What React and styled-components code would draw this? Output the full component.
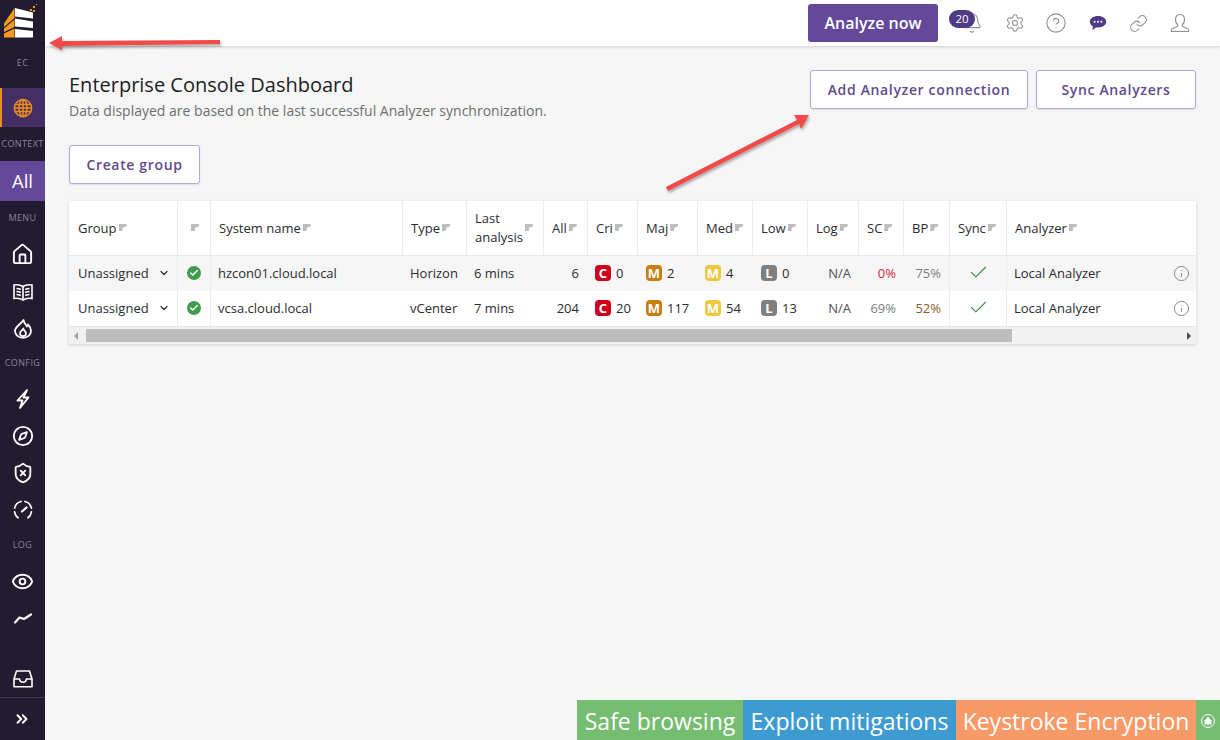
import React from 'react'
import styled, { createGlobalStyle } from 'styled-components'
import {
  Bell, Check, ChevronDown, ChevronsRight, CircleHelp, Compass, Eye, House, Info, Link,
  Settings, ShieldX,
} from 'lucide-react'

const GlobalStyle = createGlobalStyle`
  html, body { margin: 0; padding: 0; height: 100%; }
  body { font-family: "Open Sans", "Liberation Sans", sans-serif; background: #f6f6f6; overflow: hidden; }
  * { box-sizing: border-box; }
`

const Page = styled.div`
  position: relative;
  display: flex;
  width: 1220px;
  height: 740px;
  overflow: hidden;
`

const Sidebar = styled.nav`
  width: 45px;
  flex: none;
  height: 740px;
  background: #231b30;
  display: flex;
  flex-direction: column;
  align-items: stretch;
  color: #fff;
`

const LogoBox = styled.div`
  height: 42px;
  display: flex;
`

const SectionLabel = styled.div`
  height: ${p => p.$h}px;
  padding-bottom: ${p => p.$pb || 0}px;
  display: flex;
  align-items: center;
  justify-content: center;
  font-size: 9px;
  letter-spacing: 0.4px;
  color: #8b8496;
  white-space: nowrap;
`

const ActiveItem = styled.div`
  height: 39px;
  background: #432f63;
  border-left: 2px solid #f08c1e;
  padding-right: 2px;
  display: flex;
  align-items: center;
  justify-content: center;
  color: #f08c1e;
`

const AllItem = styled.div`
  height: 40px;
  padding-bottom: 1px;
  background: #64499b;
  display: flex;
  align-items: center;
  justify-content: center;
  font-size: 18.5px;
  color: #fff;
`

const NavIcon = styled.div`
  height: 37px;
  display: flex;
  align-items: center;
  justify-content: center;
  color: #fff;
`

const NavGroup = styled.div`
  display: flex;
  flex-direction: column;
  padding-top: ${p => p.$top || 0}px;
`

const Spacer = styled.div`
  flex: 1;
`

const Collapse = styled.div`
  height: 43px;
  border-top: 1px solid #3f3849;
  padding-right: 2px;
  display: flex;
  align-items: center;
  justify-content: center;
  color: #fff;
`

const Main = styled.div`
  flex: 1;
  min-width: 0;
  display: flex;
  flex-direction: column;
`

const Topbar = styled.header`
  height: 46px;
  background: #fff;
  box-shadow: 0 1px 3px rgba(0, 0, 0, 0.16);
  display: flex;
  align-items: center;
  justify-content: flex-end;
  padding: 0 30px 0 0;
`

const AnalyzeButton = styled.button`
  width: 130px;
  height: 38px;
  margin-right: 11px;
  border: 0;
  border-radius: 3px;
  background: #64499b;
  color: #fff;
  font: 600 16px "Open Sans", sans-serif;
`

const TopIcons = styled.div`
  display: flex;
  align-items: center;
  gap: 22px;
  color: #8f8f8f;
`

const BellWrap = styled.div`
  position: relative;
  width: 20px;
  height: 22px;
  margin-left: 12px;
  margin-right: 2px;
`

const CountBadge = styled.span`
  position: absolute;
  left: -12px;
  top: -2px;
  width: 26px;
  height: 18px;
  border-radius: 9px;
  background: #4f3a86;
  color: #fff;
  font-size: 11.5px;
  line-height: 17px;
  text-align: center;
`

const GearWrap = styled.div`
  display: flex;
  margin-right: -2px;
`

const Content = styled.main`
  padding: 24px 24px 0 24px;
`

const TitleRow = styled.div`
  display: flex;
  justify-content: space-between;
  align-items: flex-start;
`

const Title = styled.h1`
  margin: 0;
  font-size: 20px;
  line-height: 30px;
  font-weight: 400;
  color: #1d1d26;
`

const Subtitle = styled.p`
  margin: 1px 0 0;
  font-size: 14px;
  line-height: 20px;
  color: #6e6e6e;
`

const Actions = styled.div`
  display: flex;
  gap: 8px;
`

const OutlineButton = styled.button`
  width: ${p => p.$w}px;
  height: 39px;
  background: #fff;
  border: 1px solid #b7a6de;
  border-radius: 3px;
  color: #5f4a8c;
  font: 600 14px "Open Sans", sans-serif;
  letter-spacing: 0.65px;
  box-shadow: 0 1px 2px rgba(0, 0, 0, 0.1);
`

const GroupButton = styled(OutlineButton)`
  display: block;
  margin: 24px 0 17px;
`

const Table = styled.section`
  width: 1127px;
  background: #fff;
  box-shadow: 0 1px 3px rgba(0, 0, 0, 0.16);
  font-size: 13px;
  color: #2b2b33;
`

const columns = '109px 33px 192px 64px 77px 44px 50px 60px 55px 55px 51px 45px 46px 57px 1fr'

const HeadRow = styled.div`
  display: grid;
  grid-template-columns: ${columns};
  height: 55px;
  border-bottom: 1px solid #e8e8e8;
`

const HeadCell = styled.div`
  display: flex;
  align-items: center;
  padding-left: ${p => p.$pl ?? 8}px;
  border-right: ${p => (p.$last ? 0 : '1px solid #ececec')};
  line-height: 19px;
`

const SortMark = styled.i`
  width: 8px;
  height: 7px;
  flex: none;
  margin: -1px 0 0 ${p => p.$ml ?? 2}px;
  background: #bdbdbd;
  clip-path: polygon(0 0, 100% 0, 100% 35%, 55% 50%, 45% 100%, 0 100%);
`

const BodyRow = styled.div`
  display: grid;
  grid-template-columns: ${columns};
  height: 35px;
  background: ${p => (p.$odd ? '#f6f6f6' : '#fff')};
`

const Cell = styled.div`
  display: flex;
  align-items: center;
  justify-content: ${p => p.$justify || 'flex-start'};
  padding: ${p => p.$pad || '0 0 2px 7px'};
  border-right: ${p => (p.$line ? '1px solid #ececec' : 0)};
  color: ${p => p.$color || 'inherit'};
  white-space: nowrap;
`

const GroupCell = styled(Cell)`
  justify-content: space-between;
  padding: 0 7px 2px 9px;
`

const StatusDot = styled.span`
  width: 14px;
  height: 14px;
  border-radius: 50%;
  background: #3f9c4c;
  color: #fff;
  display: flex;
  align-items: center;
  justify-content: center;
`

const Severity = styled.span`
  width: 16px;
  height: 16px;
  flex: none;
  margin-right: 5px;
  border-radius: 4px;
  background: ${p => p.$bg};
  color: #fff;
  font-size: 13px;
  font-weight: 700;
  line-height: 16px;
  text-align: center;
`

const Scrollbar = styled.div`
  height: 18px;
  background: #f1f1f1;
  border-top: 1px solid #e8e8e8;
  display: flex;
  align-items: center;
  justify-content: space-between;
  padding: 0 5px;
`

const ScrollThumb = styled.div`
  width: 926px;
  height: 13px;
  background: #bdbdbd;
  margin-right: auto;
  margin-left: 8px;
`

const Arrow = styled.i`
  width: 0;
  height: 0;
  border-top: 4px solid transparent;
  border-bottom: 4px solid transparent;
  border-${p => (p.$left ? 'right' : 'left')}: 4px solid ${p => (p.$left ? '#a3a3a3' : '#4a4a4a')};
`

const Annotations = styled.svg`
  position: absolute;
  left: 0;
  top: 0;
  pointer-events: none;
`

const Strip = styled.div`
  position: absolute;
  right: 0;
  bottom: 0;
  height: 40px;
  display: flex;
  color: #fff;
  font-size: 23px;
`

const StripItem = styled.div`
  width: ${p => p.$w}px;
  padding-top: 1px;
  background: ${p => p.$bg};
  display: flex;
  align-items: center;
  justify-content: center;
  white-space: nowrap;
`

const Logo = () => (
  <svg width="45" height="42" viewBox="0 0 45 42">
    <g fill="#f39a1f">
      <path d="M14.500 8 L4 23.500 V27 L14.500 18Z" />
      <path d="M14.500 19.500 L4 28.500 V32 L14.500 27Z" />
      <path d="M14.500 28.500 L4 33.500 V37.500 H14.500Z" />
      <rect x="30" y="9" width="2" height="2" />
      <rect x="33" y="6" width="2" height="2" />
      <rect x="36" y="4" width="1" height="1" />
      <rect x="33" y="10" width="2" height="2" />
      <rect x="31" y="12" width="1" height="1" />
    </g>
    <g fill="#fff">
      <path d="M15 8 L33 12.500 V18.500 L15 16.500Z" />
      <path d="M15 18.500 L33 21.500 V28 L15 26.500Z" />
      <path d="M15 29 L33 31 V37.500 H15Z" />
    </g>
  </svg>
)

const GlobeIcon = () => (
  <svg width="20" height="20" viewBox="0 0 20 20" fill="none" stroke="currentColor" strokeWidth="1.5">
    <circle cx="10" cy="10" r="8.600" />
    <ellipse cx="10" cy="10" rx="4" ry="8.600" />
    <path d="M10 1.400 V18.600 M2.400 6.500 H17.600 M2.400 13.500 H17.600 M1.400 10 H18.600" />
  </svg>
)

const BookIcon = () => (
  <svg width="20" height="20" viewBox="0 0 20 20" fill="none" stroke="currentColor" strokeWidth="1.6">
    <path d="M10 4.500 C7.500 2.800 4 2.500 1 3 V16.500 C4 16 7.500 16.300 10 18 C12.500 16.300 16 16 19 16.500 V3 C16 2.500 12.500 2.800 10 4.500Z" />
    <path d="M10 4.500 V18 M3.500 6.500 C5 6.500 6.500 6.800 7.800 7.400 M3.500 9.500 C5 9.500 6.500 9.800 7.800 10.400 M3.500 12.500 C5 12.500 6.500 12.800 7.800 13.400 M16.500 6.500 C15 6.500 13.500 6.800 12.200 7.400 M16.500 9.500 C15 9.500 13.500 9.800 12.200 10.400 M16.500 12.500 C15 12.500 13.500 12.800 12.200 13.400" />
  </svg>
)

const FlameIcon = () => (
  <svg width="20" height="20" viewBox="0 0 20 20" fill="none" stroke="currentColor" strokeWidth="1.800" strokeLinejoin="round">
    <path d="M10.500 1 C11 4.500 13 5.500 14 7.500 C14.500 6.900 14.800 6.300 14.900 5.500 C16.800 7.300 18 9.300 18 11.800 C18 16 14.500 18.800 10 18.800 C5.500 18.800 2 16 2 11.800 C2 7.500 7.500 5.500 10.500 1Z" />
    <path d="M10.200 9.500 C10 11 7 12.200 7 14.300 C7 16 8.300 17.200 10 17.200 C11.700 17.200 13 16 13 14.300 C13 12.500 10.800 11.500 10.200 9.500Z" />
  </svg>
)

const BoltIcon = () => (
  <svg width="20" height="20" viewBox="0 0 20 20" fill="none" stroke="currentColor" strokeWidth="1.800" strokeLinejoin="round">
    <path d="M14 1 L4.500 11.500 H9.500 L7 19 L15.500 8.500 H10.500Z" />
  </svg>
)

const GaugeIcon = () => (
  <svg width="20" height="20" viewBox="0 0 20 20" fill="none" stroke="currentColor" strokeWidth="1.800" strokeLinecap="round">
    <path d="M5 17.800 A8.700 8.700 0 0 1 1.600 12 M1.600 8 A8.700 8.700 0 0 1 8 1.500 M12 1.500 A8.700 8.700 0 0 1 18.400 8 M18.400 12 A8.700 8.700 0 0 1 15 17.800" />
    <path d="M9 11.500 L13.500 7.500" strokeWidth="2.200" />
  </svg>
)

const TrendIcon = () => (
  <svg width="20" height="20" viewBox="0 0 20 20" fill="none" stroke="currentColor" strokeWidth="2.200" strokeLinecap="round" strokeLinejoin="round">
    <path d="M2 13.500 L6.500 8.500 L11 10 L18 5.500" />
  </svg>
)

const TrayIcon = () => (
  <svg width="20" height="18" viewBox="0 0 20 18" fill="none" stroke="currentColor" strokeWidth="1.600" strokeLinejoin="round">
    <path d="M3.500 1 H16.500 L19 9 V16.800 H1 V9Z" />
    <path d="M1 9 H6.500 C6.800 11 8 12.200 10 12.200 C12 12.200 13.200 11 13.500 9 H19" />
  </svg>
)

const ChatIcon = () => (
  <svg width="18" height="16" viewBox="0 0 18 16">
    <path d="M9 1 C13.700 1 17.200 3.500 17.200 6.800 C17.200 10.100 13.700 12.500 9 12.500 C8.300 12.500 7.600 12.450 7 12.300 C5.900 13.600 4.300 14.600 2.700 14.900 C3.500 13.900 4 12.800 4 11.400 C2 10.300 0.800 8.700 0.800 6.800 C0.800 3.500 4.300 1 9 1Z" fill="#4f3a86" />
    <circle cx="5.600" cy="6.800" r="1" fill="#fff" />
    <circle cx="9" cy="6.800" r="1" fill="#fff" />
    <circle cx="12.400" cy="6.800" r="1" fill="#fff" />
  </svg>
)

const UserIcon = () => (
  <svg width="20" height="20" viewBox="0 0 20 20" fill="none" stroke="currentColor" strokeWidth="1.200" strokeLinejoin="round">
    <path d="M10 1.500 C12.900 1.500 14.500 3.700 14.500 6.500 C14.500 8.800 13.500 10.800 12.300 11.800 V13 C12.300 14 17 14.500 18.500 16.500 V18.500 H1.500 V16.500 C3 14.500 7.700 14 7.700 13 V11.800 C6.500 10.800 5.500 8.800 5.500 6.500 C5.500 3.700 7.100 1.500 10 1.500Z" />
  </svg>
)

const HomeBadge = () => (
  <svg width="16" height="16" viewBox="0 0 16 16">
    <circle cx="8" cy="8" r="6.500" fill="none" stroke="#fff" strokeWidth="1" />
    <path d="M8 3.800 L11.500 7.500 V11.500 H4.500 V7.500Z" fill="#fff" />
  </svg>
)

const headers = [
  { label: 'Group', pl: 9 },
  { label: '', pl: 13, ml: 0 },
  { label: 'System name' },
  { label: 'Type' },
  { label: 'Last analysis', wrap: true },
  { label: 'All' },
  { label: 'Cri' },
  { label: 'Maj' },
  { label: 'Med' },
  { label: 'Low' },
  { label: 'Log' },
  { label: 'SC' },
  { label: 'BP' },
  { label: 'Sync' },
  { label: 'Analyzer', last: true },
]

const rows = [
  { name: 'hzcon01.cloud.local', type: 'Horizon', last: '6 mins', all: 6, cri: 0, maj: 2, med: 4, low: 0, sc: '0%', scColor: '#d4233c', bp: '75%', bpColor: '#7d7d7d' },
  { name: 'vcsa.cloud.local', type: 'vCenter', last: '7 mins', all: 204, cri: 20, maj: 117, med: 54, low: 13, sc: '69%', scColor: '#7d7d7d', bp: '52%', bpColor: '#8a5a2b' },
]

const SeverityCell = ({ letter, bg, value, left = 7 }) => (
  <Cell $pad={`0 0 2px ${left}px`}>
    <Severity $bg={bg}>{letter}</Severity>
    {value}
  </Cell>
)

export default function App() {
  return (
    <Page>
      <GlobalStyle />
      <Sidebar>
        <LogoBox><Logo /></LogoBox>
        <SectionLabel $h={46} $pb={6}>EC</SectionLabel>
        <ActiveItem><GlobeIcon /></ActiveItem>
        <SectionLabel $h={34} $pb={2}>CONTEXT</SectionLabel>
        <AllItem>All</AllItem>
        <SectionLabel $h={33}>MENU</SectionLabel>
        <NavGroup $top={2}>
          <NavIcon><House size={23} strokeWidth={2} /></NavIcon>
          <NavIcon><BookIcon /></NavIcon>
          <NavIcon><FlameIcon /></NavIcon>
        </NavGroup>
        <SectionLabel $h={30}>CONFIG</SectionLabel>
        <NavGroup $top={3}>
          <NavIcon><BoltIcon /></NavIcon>
          <NavIcon><Compass size={22} strokeWidth={2} /></NavIcon>
          <NavIcon><ShieldX size={22} strokeWidth={2} /></NavIcon>
          <NavIcon><GaugeIcon /></NavIcon>
        </NavGroup>
        <SectionLabel $h={32}>LOG</SectionLabel>
        <NavGroup $top={3}>
          <NavIcon><Eye size={23} strokeWidth={2} /></NavIcon>
          <NavIcon><TrendIcon /></NavIcon>
        </NavGroup>
        <Spacer />
        <NavIcon><TrayIcon /></NavIcon>
        <Collapse><ChevronsRight size={18} strokeWidth={2.5} /></Collapse>
      </Sidebar>

      <Main>
        <Topbar>
          <AnalyzeButton>Analyze now</AnalyzeButton>
          <TopIcons>
            <BellWrap>
              <Bell size={22} strokeWidth={1.2} />
              <CountBadge>20</CountBadge>
            </BellWrap>
            <GearWrap><Settings size={20} strokeWidth={1.3} /></GearWrap>
            <CircleHelp size={22} strokeWidth={1.2} />
            <ChatIcon />
            <Link size={19} strokeWidth={1.3} />
            <UserIcon />
          </TopIcons>
        </Topbar>

        <Content>
          <TitleRow>
            <div>
              <Title>Enterprise Console Dashboard</Title>
              <Subtitle>Data displayed are based on the last successful Analyzer synchronization.</Subtitle>
            </div>
            <Actions>
              <OutlineButton $w={218}>Add Analyzer connection</OutlineButton>
              <OutlineButton $w={160}>Sync Analyzers</OutlineButton>
            </Actions>
          </TitleRow>
          <GroupButton $w={131}>Create group</GroupButton>

          <Table>
            <HeadRow>
              {headers.map((h, i) => (
                <HeadCell key={i} $pl={h.pl} $last={h.last}>
                  {h.wrap ? <span>Last<br />analysis</span> : h.label}
                  <SortMark $ml={h.ml} />
                </HeadCell>
              ))}
            </HeadRow>
            {rows.map((r, i) => (
              <BodyRow key={r.name} $odd={i === 0}>
                <GroupCell $line>Unassigned<ChevronDown size={12} strokeWidth={2.4} /></GroupCell>
                <Cell $line $justify="center" $pad="0 0 2px"><StatusDot><Check size={10} strokeWidth={3.5} /></StatusDot></Cell>
                <Cell>{r.name}</Cell>
                <Cell>{r.type}</Cell>
                <Cell>{r.last}</Cell>
                <Cell $justify="flex-end" $pad="0 9px 2px 0">{r.all}</Cell>
                <SeverityCell letter="C" bg="#d0021b" value={r.cri} />
                <SeverityCell letter="M" bg="#c97c10" value={r.maj} left={8} />
                <SeverityCell letter="M" bg="#edc840" value={r.med} />
                <SeverityCell letter="L" bg="#808080" value={r.low} left={8} />
                <Cell $justify="flex-end" $pad="0 8px 2px 0" $color="#4d4d56">N/A</Cell>
                <Cell $justify="flex-end" $pad="0 8px 2px 0" $color={r.scColor}>{r.sc}</Cell>
                <Cell $justify="flex-end" $pad="0 8px 2px 0" $color={r.bpColor} $line>{r.bp}</Cell>
                <Cell $justify="center" $pad="0 0 2px" $line $color="#3a8f47"><Check size={21} strokeWidth={1.3} /></Cell>
                <Cell $justify="space-between" $pad="0 6px 1px 7px">
                  Local Analyzer
                  <Info size={17} strokeWidth={1.3} color="#808080" />
                </Cell>
              </BodyRow>
            ))}
            <Scrollbar>
              <Arrow $left />
              <ScrollThumb />
              <Arrow />
            </Scrollbar>
          </Table>
        </Content>
      </Main>

      <Annotations width="1220" height="740" viewBox="0 0 1220 740">
        <defs>
          <filter id="soft" x="-10%" y="-50%" width="120%" height="200%">
            <feDropShadow dx="1" dy="2" stdDeviation="1.500" floodColor="#000" floodOpacity="0.35" />
          </filter>
        </defs>
        <g fill="#f24a4a" filter="url(#soft)">
          <path d="M49 43 L62 36 L62 41 L220 40 L220 44 L62 46 L62 50Z" />
          <path d="M809 115 L794 115 L797 120 L666 187 L668 191 L799 124 L801 129Z" />
        </g>
      </Annotations>

      <Strip>
        <StripItem $w={166} $bg="#75bd71">Safe browsing</StripItem>
        <StripItem $w={213} $bg="#3e9bd2">Exploit mitigations</StripItem>
        <StripItem $w={240} $bg="#f89968">Keystroke Encryption</StripItem>
        <StripItem $w={24} $bg="#75bd71"><HomeBadge /></StripItem>
      </Strip>
    </Page>
  )
}
